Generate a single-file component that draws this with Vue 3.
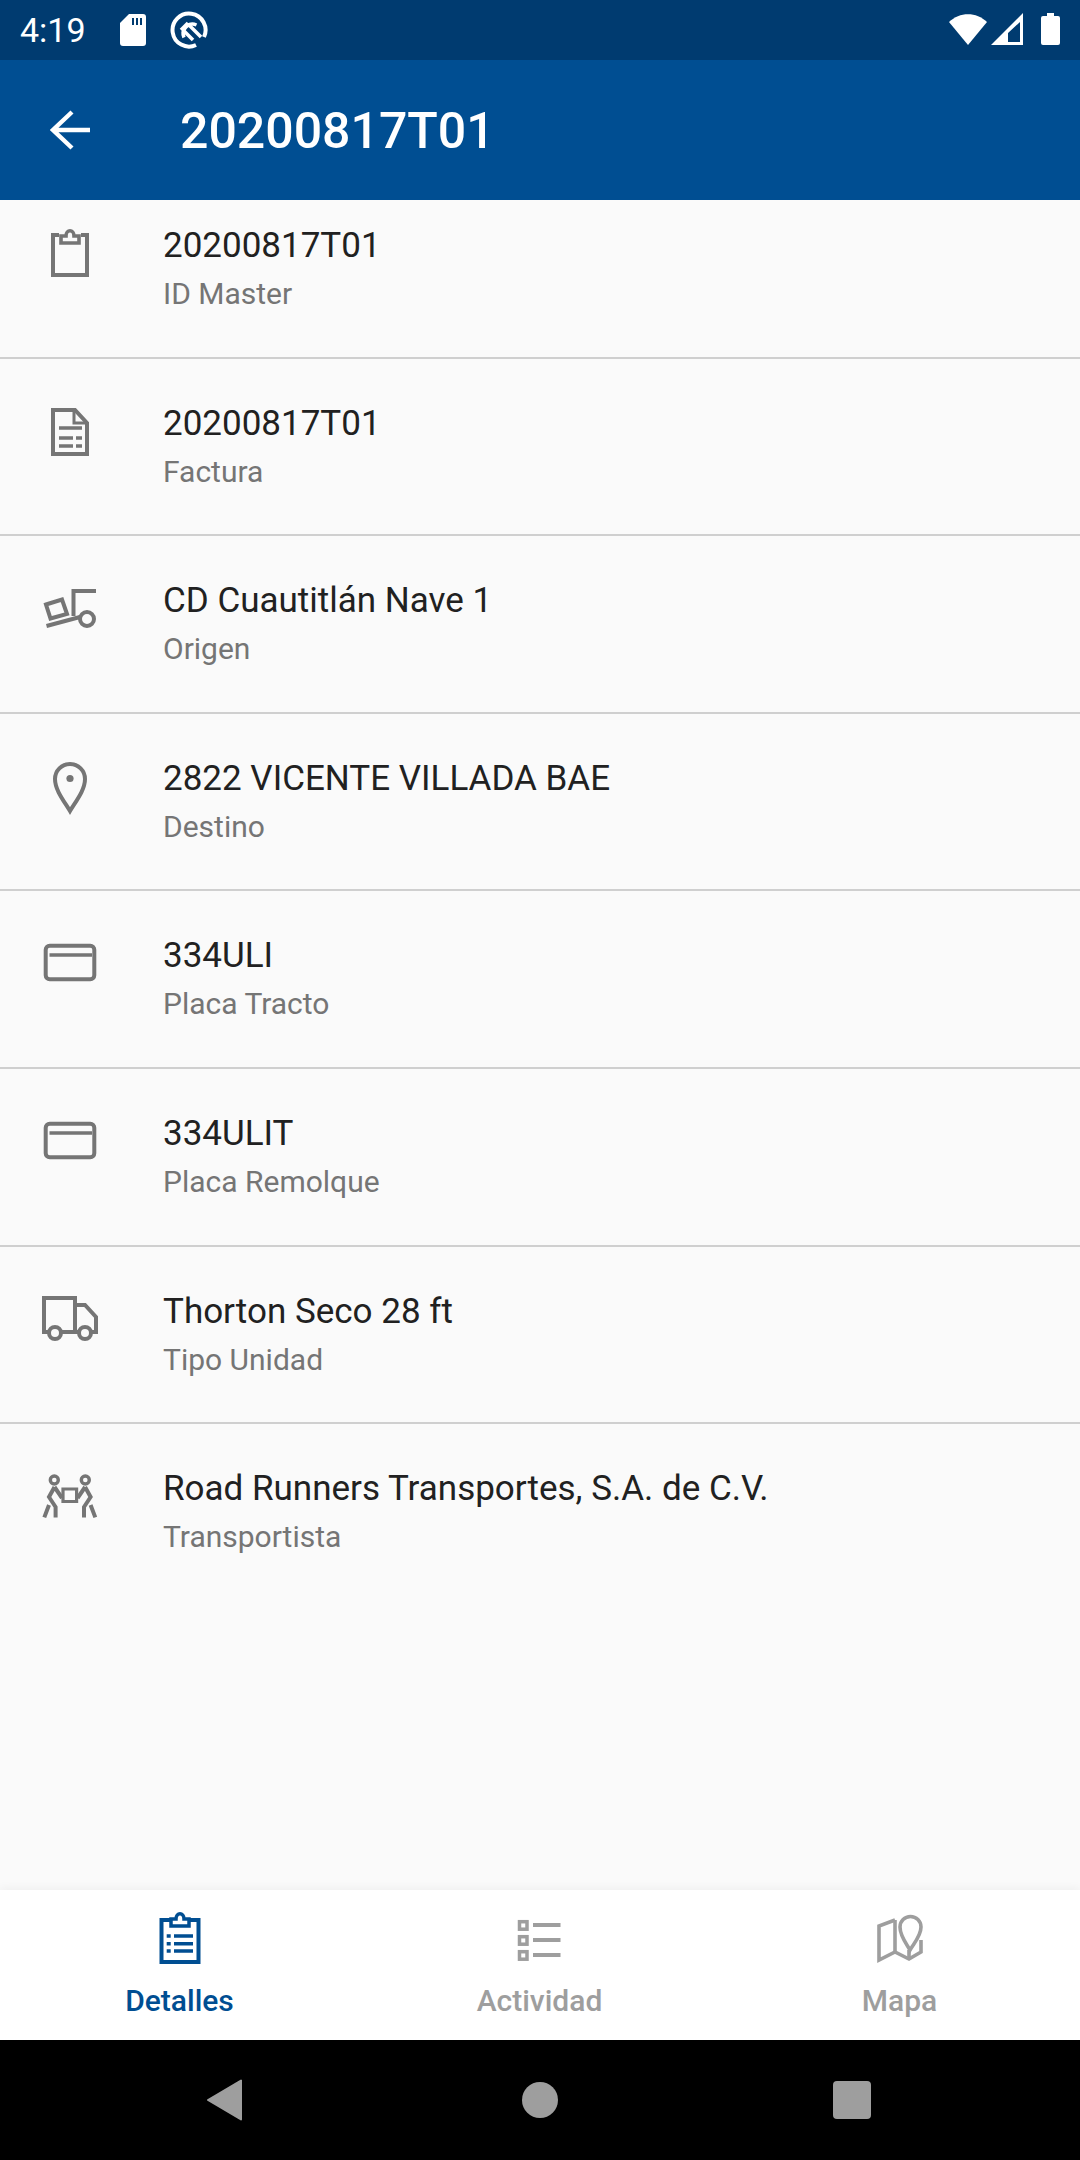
<script setup>
const rows = [
  { icon: "clipboard", value: "20200817T01", label: "ID Master" },
  { icon: "doc", value: "20200817T01", label: "Factura" },
  { icon: "dolly", value: "CD Cuautitlán Nave 1", label: "Origen" },
  { icon: "pin", value: "2822 VICENTE VILLADA BAE", label: "Destino" },
  { icon: "card", value: "334ULI", label: "Placa Tracto" },
  { icon: "card", value: "334ULIT", label: "Placa Remolque" },
  { icon: "truck", value: "Thorton Seco 28 ft", label: "Tipo Unidad" },
  { icon: "workers", value: "Road Runners Transportes, S.A. de C.V.", label: "Transportista" },
];
</script>

<template>
  <div class="screen">
    <div class="statusBar">
      <span class="time">4:19</span>
      <svg class="sdIcon" width="26" height="32" viewBox="0 0 26 32">
        <path d="M9 0H23A3 3 0 0 1 26 3V29A3 3 0 0 1 23 32H3A3 3 0 0 1 0 29V9Z" fill="#fff" />
        <path d="M12 4h2v7h-2zM16 4h2v7h-2zM20 4h2v7h-2z" fill="#003b70" />
      </svg>
      <svg class="syncIcon" width="38" height="38" viewBox="0 0 38 38" fill="none" stroke="#fff" stroke-width="4">
        <path d="M34 26A16.5 16.5 0 1 0 26 34" />
        <path d="M26.5 14A9.5 9.5 0 0 0 14 26.5" stroke-width="3.5" />
        <path d="M18 13L31 26" stroke-width="3.5" />
        <path d="M11 19L18 12" stroke-width="3.5" />
        <path d="M14 20L23 29" stroke-width="3.5" />
      </svg>
      <span class="spacer"></span>
      <svg class="wifiIcon" width="38" height="31" viewBox="0 0 38 31">
        <path d="M0 8C10.5 -2.5 27.5 -2.5 38 8L19 31Z" fill="#fff" />
      </svg>
      <svg class="signalIcon" width="33" height="32" viewBox="0 0 33 32">
        <path fill-rule="evenodd" d="M32 0V32H0ZM29 9L17 20V29H29Z" fill="#fff" />
      </svg>
      <svg class="batteryIcon" width="19" height="32" viewBox="0 0 19 32">
        <path d="M6 0H13V3H17A2 2 0 0 1 19 5V30A2 2 0 0 1 17 32H2A2 2 0 0 1 0 30V5A2 2 0 0 1 2 3H6Z" fill="#fff" />
      </svg>
    </div>

    <div class="appBar">
      <svg width="40" height="40" viewBox="0 0 40 40" fill="none" stroke="#fff" stroke-width="4.4">
        <path d="M40 20H4M22 2L3 20L22 38" />
      </svg>
      <span class="title">20200817T01</span>
    </div>

    <div class="list">
      <div class="rows">
        <div v-for="row in rows" :key="row.label" class="row">
          <svg class="rowIcon" width="60" height="60" viewBox="0 0 60 60" fill="none" stroke="#757575" stroke-width="4">
            <template v-if="row.icon === 'clipboard'">
              <path d="M19 11H13V51H47V11H41" />
              <path d="M21 19H39V12H34C34 5 26 5 26 12H21Z" stroke-width="3.6" />
            </template>
            <template v-else-if="row.icon === 'doc'">
              <path d="M13 8H35L47 21V52H13Z" />
              <path d="M34 8V21H47" stroke-width="3" />
              <path d="M19 26H42M19 36H33M36 36H42M19 44H33M36 44H42" stroke-width="3.6" />
            </template>
            <template v-else-if="row.icon === 'dolly'">
              <path d="M56 12H33.5V37" />
              <circle cx="47" cy="40" r="7" />
              <path d="M6.5 47L40 38" />
              <path d="M6 25.5L22 20.5L27 35L10.5 39.5Z" />
            </template>
            <template v-else-if="row.icon === 'pin'">
              <path d="M30 54C24 44 15 33 15 22A15 15 0 0 1 45 22C45 33 36 44 30 54Z" />
              <circle cx="30" cy="21.5" r="3.6" fill="#757575" stroke="none" />
            </template>
            <template v-else-if="row.icon === 'card'">
              <rect x="5.7" y="11.7" width="48.6" height="33.6" rx="4" />
              <path d="M9.5 21H52" stroke-width="3.6" />
            </template>
            <template v-else-if="row.icon === 'truck'">
              <path d="M9 42H4V8H35V42H21" />
              <path d="M35 15H45L56 27V42H52M39 42H35" />
              <circle cx="15" cy="43" r="6" />
              <circle cx="45" cy="43" r="6" />
            </template>
            <template v-else>
              <circle cx="14.3" cy="13" r="4" stroke-width="3.4" />
              <circle cx="45.3" cy="13" r="4" stroke-width="3.4" />
              <path d="M23 22H36.6V34.5H23Z" stroke-width="3.2" />
              <path d="M14.5 20L9 30L15.6 40V50.4M14.5 20L22 31M9 38L4.3 50.4" />
              <path d="M45.1 20L50.6 30L44 40V50.4M45.1 20L37.6 31M50.6 38L55.3 50.4" />
            </template>
          </svg>
          <div class="rowText">
            <div class="value">{{ row.value }}</div>
            <div class="label">{{ row.label }}</div>
          </div>
        </div>
      </div>
    </div>

    <div class="tabs">
      <div class="tab active">
        <svg width="46" height="54" viewBox="0 0 46 54" fill="none" stroke="#004e92" stroke-width="4">
          <path d="M13 8H4.5V50H41.5V8H33" />
          <path d="M14 14H32V7H27C27 0 19 0 19 7H14Z" stroke-width="3.5" />
          <path d="M9.7 24H13.7M17 24H36M9.7 31.7H13.7M17 31.7H36M9.7 39H13.7M17 39H36" stroke-width="3.5" />
        </svg>
        <span>Detalles</span>
      </div>
      <div class="tab">
        <svg width="46" height="54" viewBox="0 0 46 54" fill="none" stroke="#9e9e9e" stroke-width="4">
          <rect x="2.5" y="9.7" width="7.5" height="7.5" stroke-width="3.5" />
          <rect x="2.5" y="24.7" width="7.5" height="7.5" stroke-width="3.5" />
          <rect x="2.5" y="39.7" width="7.5" height="7.5" stroke-width="3.5" />
          <path d="M16 13H43.5M16 28H43.5M16 43H43.5" />
        </svg>
        <span>Actividad</span>
      </div>
      <div class="tab">
        <svg width="46" height="54" viewBox="0 0 46 54" fill="none" stroke="#9e9e9e" stroke-width="3.6">
          <path d="M18 8L2 14V48L18 40L32 47L44 40V28" />
          <path d="M18 8V40M32 38V47" />
          <path d="M33 38C29 31 23 24 23 15A10.5 10.5 0 0 1 44 15C44 24 37 31 33 38Z" />
        </svg>
        <span>Mapa</span>
      </div>
    </div>

    <div class="navBar">
      <svg width="36" height="42" viewBox="0 0 36 42">
        <path d="M34 1.5V40.5L1 21Z" fill="#9e9e9e" stroke="#9e9e9e" stroke-width="2" stroke-linejoin="round" />
      </svg>
      <span class="navCircle"></span>
      <span class="navSquare"></span>
    </div>
  </div>
</template>

<style>
body {
  background: #fafafa;
}
</style>

<style scoped>
.screen {
  width: 1080px;
  height: 2160px;
  display: flex;
  flex-direction: column;
  font-family: Roboto, sans-serif;
  background: #fafafa;
  overflow: hidden;
}

.statusBar {
  height: 60px;
  flex: none;
  display: flex;
  align-items: center;
  background: #003b70;
  color: #fff;
  padding: 0 20px;
  box-sizing: border-box;
}

.time {
  font-size: 34px;
  width: 96px;
}

.sdIcon {
  margin-left: 4px;
}

.syncIcon {
  margin-left: 24px;
}

.spacer {
  flex: 1;
}

.wifiIcon,
.signalIcon,
.batteryIcon {
  margin-bottom: 2px;
}

.wifiIcon {
  margin-right: 1px;
}

.signalIcon {
  margin-left: 3px;
}

.batteryIcon {
  margin-left: 17px;
}

.appBar {
  height: 140px;
  flex: none;
  display: flex;
  align-items: center;
  background: #004e92;
  color: #fff;
  padding-left: 50px;
}

.title {
  font-size: 50px;
  font-weight: 500;
  margin: 2px 0 0 90px;
}

.list {
  flex: 1;
  overflow: hidden;
}

.rows {
  margin-top: -19px;
}

.row {
  height: 177.6px;
  box-sizing: border-box;
  display: flex;
  padding: 43px 0 0 40px;
  border-bottom: 2px solid #cfcfcf;
}

.row:last-child {
  border-bottom: none;
}

.rowIcon {
  flex: none;
}

.rowText {
  margin-left: 63px;
  margin-top: -2px;
}

.value {
  font-size: 35px;
  line-height: 48px;
  color: #212121;
}

.label {
  font-size: 30px;
  line-height: 47px;
  color: #757575;
}

.tabs {
  height: 150px;
  flex: none;
  display: flex;
  background: #fff;
  box-shadow: 0 -3px 8px rgba(0, 0, 0, 0.04);
}

.tab {
  flex: 1;
  display: flex;
  flex-direction: column;
  align-items: center;
  padding-top: 22px;
  box-sizing: border-box;
  color: #9e9e9e;
  font-size: 30px;
  font-weight: 500;
}

.tab span {
  margin: 17px 1px 0 0;
}

.tab.active {
  color: #004e92;
}

.navBar {
  height: 120px;
  flex: none;
  background: #000;
  display: flex;
  align-items: center;
  padding-left: 207px;
}

.navCircle {
  width: 36px;
  height: 36px;
  margin-left: 279px;
  border-radius: 50%;
  background: #9e9e9e;
}

.navSquare {
  width: 38px;
  height: 38px;
  margin-left: 275px;
  border-radius: 4px;
  background: #9e9e9e;
}
</style>
